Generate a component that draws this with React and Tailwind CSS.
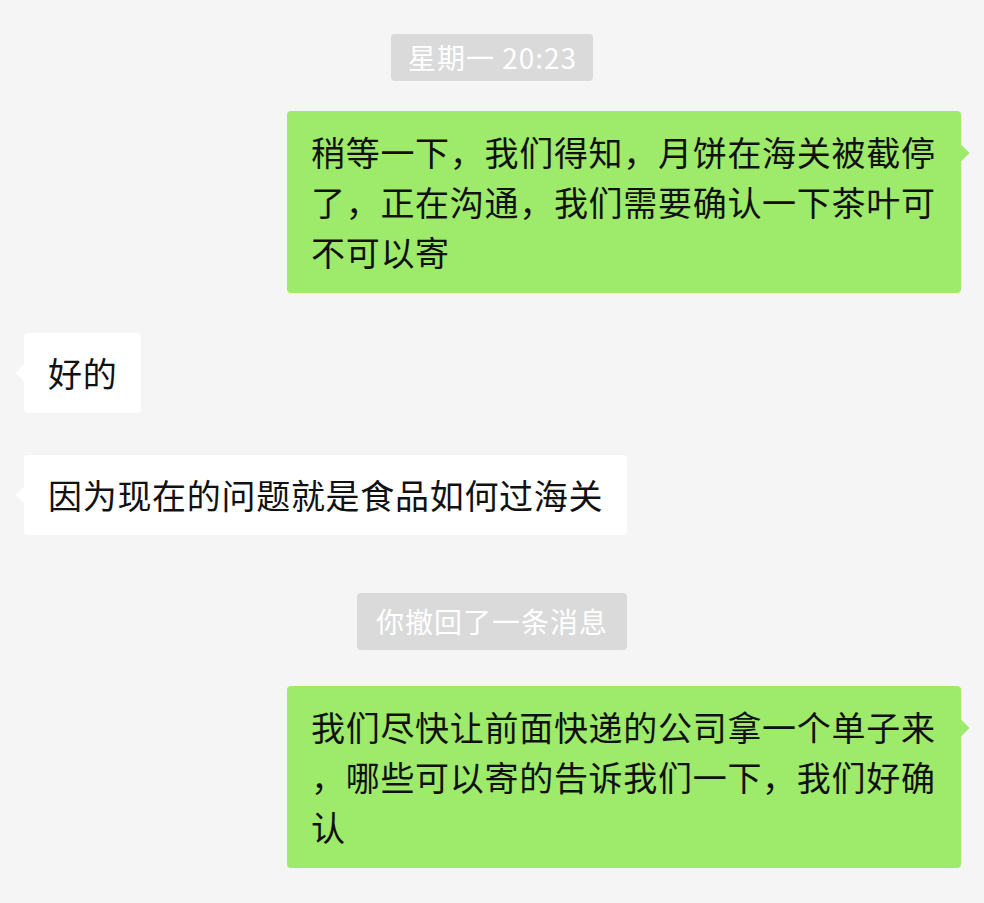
const FONT = "font-['Noto_Sans_CJK_SC','Noto_Sans',sans-serif]";

function TimeLabel({ children, tall }) {
  return (
    <div className="flex justify-center">
      <div
        className={`rounded-[4px] bg-[#dadada] text-white text-[28px] tracking-[1px] ${
          tall ? "px-[19px] leading-[57px]" : "pl-[17px] pr-4 leading-[47px]"
        }`}
      >
        {children}
      </div>
    </div>
  );
}

function MyBubble({ lines }) {
  return (
    <div className="flex justify-end pr-[23px]">
      <div className="relative w-[674px] rounded-[4px] bg-[#9eea6a] px-6 py-4 text-[34px] leading-[50px] tracking-[0.7px] text-[#111]">
        <span className="absolute right-[-6px] top-[36px] h-3 w-3 rotate-45 bg-[#9eea6a]" />
        {lines.map((l, i) => (
          <div key={i} className="relative whitespace-nowrap">
            {l}
          </div>
        ))}
      </div>
    </div>
  );
}

function TheirBubble({ text }) {
  return (
    <div className="flex justify-start pl-6">
      <div className="relative rounded-[4px] bg-white px-6 py-[15px] text-[34px] leading-[50px] tracking-[0.7px] text-[#111]">
        <span className="absolute left-[-6px] top-[34px] h-3 w-3 rotate-45 bg-white" />
        <div className="relative whitespace-nowrap">{text}</div>
      </div>
    </div>
  );
}

export default function App() {
  return (
    <div className={`h-[903px] w-[984px] overflow-hidden bg-[#f5f5f5] ${FONT}`}>
      <div className="flex flex-col pt-[34px]">
        <TimeLabel>星期一 20:23</TimeLabel>
        <div className="mt-[30px]">
          <MyBubble
            lines={[
              "稍等一下，我们得知，月饼在海关被截停",
              "了，正在沟通，我们需要确认一下茶叶可",
              "不可以寄",
            ]}
          />
        </div>
        <div className="mt-10">
          <TheirBubble text="好的" />
        </div>
        <div className="mt-[42px]">
          <TheirBubble text="因为现在的问题就是食品如何过海关" />
        </div>
        <div className="mt-[58px]">
          <TimeLabel tall>你撤回了一条消息</TimeLabel>
        </div>
        <div className="mt-9">
          <MyBubble
            lines={[
              "我们尽快让前面快递的公司拿一个单子来",
              "，哪些可以寄的告诉我们一下，我们好确",
              "认",
            ]}
          />
        </div>
      </div>
    </div>
  );
}
